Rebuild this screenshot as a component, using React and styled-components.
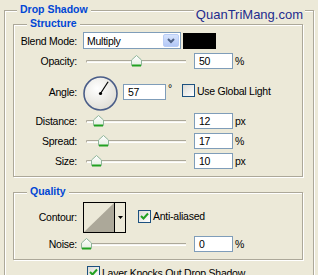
import React from "react";
import styled, { createGlobalStyle } from "styled-components";

const GlobalStyle = createGlobalStyle`
  html, body {
    margin: 0;
    background: #ece9d8;
    overflow: hidden;
  }
  body {
    font-family: "Liberation Sans", Arial, sans-serif;
    font-size: 10.5px;
    letter-spacing: -0.25px;
    color: #000;
  }
`;

const Panel = styled.div`
  position: relative;
  box-sizing: border-box;
  width: 310px;
  margin: 10px 0 0 4px;
  padding: 13px 10px 20px 8px;
  border: 1px solid #aca899;
  box-shadow: inset 1px 1px 0 #fff, 1px 1px 0 #fff;
`;

const Group = styled.div`
  position: relative;
  border: 1px solid #aca899;
  box-shadow: inset 1px 1px 0 #fff, 1px 1px 0 #fff;
  padding: ${(p) => p.$pad};
  margin-top: ${(p) => p.$top || 0}px;
  display: flex;
  flex-direction: column;
`;

const Legend = styled.div`
  position: absolute;
  left: ${(p) => p.$left}px;
  top: -8px;
  padding: 0 3px;
  background: #ece9d8;
  color: #0046d5;
  font-weight: bold;
  line-height: 13px;
  letter-spacing: 0;
`;

const Watermark = styled.div`
  position: absolute;
  right: 8px;
  top: -3px;
  padding: 0 2px;
  background: #ece9d8;
  color: #1e2c8e;
  font-size: 13px;
  line-height: 13px;
  letter-spacing: 0;
`;

const Row = styled.div`
  display: flex;
  align-items: center;
  height: ${(p) => p.$h}px;
`;

const Label = styled.div`
  width: 63px;
  margin-right: 6px;
  text-align: right;
  white-space: nowrap;
`;

const Select = styled.div`
  position: relative;
  box-sizing: border-box;
  width: 98px;
  height: 17px;
  border: 1px solid #7f9db9;
  background: #fff;
  display: flex;
  align-items: center;
  padding-left: 3px;
`;

const DropButton = styled.div`
  position: absolute;
  right: 1px;
  top: 1px;
  width: 16px;
  height: 13px;
  box-sizing: border-box;
  border: 1px solid #b9cdf6;
  border-radius: 2px;
  background: linear-gradient(#d6e3fd, #b3c8f6);
  display: flex;
  align-items: center;
  justify-content: center;
`;

const Swatch = styled.div`
  width: 33px;
  height: 16px;
  margin-left: 2px;
  background: #000;
`;

const SliderBox = styled.div`
  position: relative;
  width: 106px;
  height: 12px;
  margin-right: 5px;
`;

const Track = styled.div`
  position: absolute;
  left: 3px;
  right: 3px;
  top: 5px;
  height: 1px;
  border: 1px solid #aca899;
  border-right: none;
  border-bottom-color: #fff;
  border-radius: 2px 0 0 2px;
  background: #f4f3ee;
`;

const Thumb = styled.svg`
  position: absolute;
  top: 0;
  width: 11px;
  height: 12px;
`;

const Input = styled.div`
  box-sizing: border-box;
  width: ${(p) => p.$w || 39}px;
  height: 16px;
  border: 1px solid #7f9db9;
  background: #fff;
  padding-left: 4px;
  line-height: 14px;
`;

const Unit = styled.span`
  margin-left: 2px;
  align-self: ${(p) => (p.$top ? "flex-start" : "center")};
  margin-top: ${(p) => (p.$top ? "9px" : "0")};
`;

const Dial = styled.svg`
  width: 35px;
  height: 35px;
  margin: 3px 5px 0 0;
`;

const Check = styled.label`
  display: flex;
  align-items: center;
  gap: 2px;
  margin-left: ${(p) => p.$left || 0}px;
  margin-bottom: ${(p) => p.$bottom || 0}px;
  white-space: nowrap;
`;

const Box = styled.span`
  box-sizing: border-box;
  width: 13px;
  height: 13px;
  border: 1px solid #1c5180;
  background: linear-gradient(135deg, #dcdbd5, #fff);
  display: flex;
  align-items: center;
  justify-content: center;
`;

const Contour = styled.div`
  box-sizing: border-box;
  width: 43px;
  height: 31px;
  border: 1px solid #000;
  display: flex;
  margin-right: 12px;
`;

const ContourCurve = styled.svg`
  width: 30px;
  height: 29px;
  border-right: 1px solid #000;
`;

const ContourArrow = styled.div`
  flex: 1;
  display: flex;
  align-items: center;
  justify-content: center;
`;

const BottomRow = styled.div`
  margin: 6px 0 0 74px;
`;

function CheckBox({ checked, children, left, bottom }) {
  return (
    <Check $left={left} $bottom={bottom}>
      <Box>
        {checked && (
          <svg width="9" height="9" viewBox="0 0 9 9">
            <path d="M1 4 L3.5 6.5 L8 1.5" stroke="#21a121" strokeWidth="2" fill="none" />
          </svg>
        )}
      </Box>
      {children}
    </Check>
  );
}

function Slider({ value }) {
  return (
    <SliderBox>
      <Track />
      <Thumb viewBox="0 0 11 12" style={{ left: 3 + value - 5 }}>
        <defs>
          <linearGradient id="thumbFill" x1="0" y1="0" x2="0" y2="1">
            <stop offset="0" stopColor="#ffffff" />
            <stop offset="1" stopColor="#e6eee2" />
          </linearGradient>
        </defs>
        <polygon
          points="0.5,10.5 0.5,5 5.5,0.5 10.5,5 10.5,10.5"
          fill="url(#thumbFill)"
          stroke="#8fb59a"
        />
        <rect x="1" y="9.5" width="9" height="2" fill="#21a121" />
      </Thumb>
    </SliderBox>
  );
}

function SliderRow({ label, value, unit }) {
  return (
    <Row $h={20}>
      <Label>{label}</Label>
      <Slider value={value} />
      <Input>{value}</Input>
      <Unit>{unit}</Unit>
    </Row>
  );
}

export default function App() {
  const angle = 57;
  const rad = (angle * Math.PI) / 180;
  const ex = 17.5 + Math.cos(rad) * 14;
  const ey = 17.5 - Math.sin(rad) * 14;

  return (
    <>
      <GlobalStyle />
      <Panel>
        <Legend $left={12}>Drop Shadow</Legend>
        <Watermark>QuanTriMang.com</Watermark>

        <Group $pad="7px 0 5px 0">
          <Legend $left={13}>Structure</Legend>
          <Row $h={17}>
            <Label>Blend Mode:</Label>
            <Select>
              Multiply
              <DropButton>
                <svg width="8" height="6" viewBox="0 0 8 6">
                  <path d="M1 1 L4 4 L7 1" stroke="#4d6185" strokeWidth="2" fill="none" />
                </svg>
              </DropButton>
            </Select>
            <Swatch />
          </Row>
          <Row $h={24}>
            <Label>Opacity:</Label>
            <Slider value={50} />
            <Input>50</Input>
            <Unit>%</Unit>
          </Row>
          <Row $h={38}>
            <Label>Angle:</Label>
            <Dial viewBox="0 0 35 35">
              <defs>
                <radialGradient id="dialFill" cx="0.4" cy="0.35" r="0.7">
                  <stop offset="0" stopColor="#ffffff" />
                  <stop offset="1" stopColor="#dedcd4" />
                </radialGradient>
              </defs>
              <circle cx="17.5" cy="17.5" r="16.5" fill="url(#dialFill)" stroke="#4a5d88" strokeWidth="1.6" />
              <line x1="17.5" y1="17.5" x2={ex} y2={ey} stroke="#000" strokeWidth="1.2" />
              <circle cx="17.5" cy="17.5" r="1.6" fill="#000" />
            </Dial>
            <Input $w={43}>{angle}</Input>
            <Unit $top>°</Unit>
            <CheckBox left={10} bottom={3}>Use Global Light</CheckBox>
          </Row>
          <SliderRow label="Distance:" value={12} unit="px" />
          <SliderRow label="Spread:" value={17} unit="%" />
          <SliderRow label="Size:" value={10} unit="px" />
        </Group>

        <Group $pad="9px 0 5px 0" $top={15}>
          <Legend $left={13}>Quality</Legend>
          <Row $h={30}>
            <Label>Contour:</Label>
            <Contour>
              <ContourCurve viewBox="0 0 30 29">
                <rect width="30" height="29" fill="#ece9d8" />
                <polygon points="0,29 30,0 30,29" fill="#aca899" />
              </ContourCurve>
              <ContourArrow>
                <svg width="5" height="3" viewBox="0 0 5 3">
                  <polygon points="0,0 5,0 2.5,3" fill="#000" />
                </svg>
              </ContourArrow>
            </Contour>
            <CheckBox checked bottom={2}>Anti-aliased</CheckBox>
          </Row>
          <div style={{ height: 2 }} />
          <SliderRow label="Noise:" value={0} unit="%" />
        </Group>

        <BottomRow>
          <CheckBox checked>Layer Knocks Out Drop Shadow</CheckBox>
        </BottomRow>
      </Panel>
    </>
  );
}
